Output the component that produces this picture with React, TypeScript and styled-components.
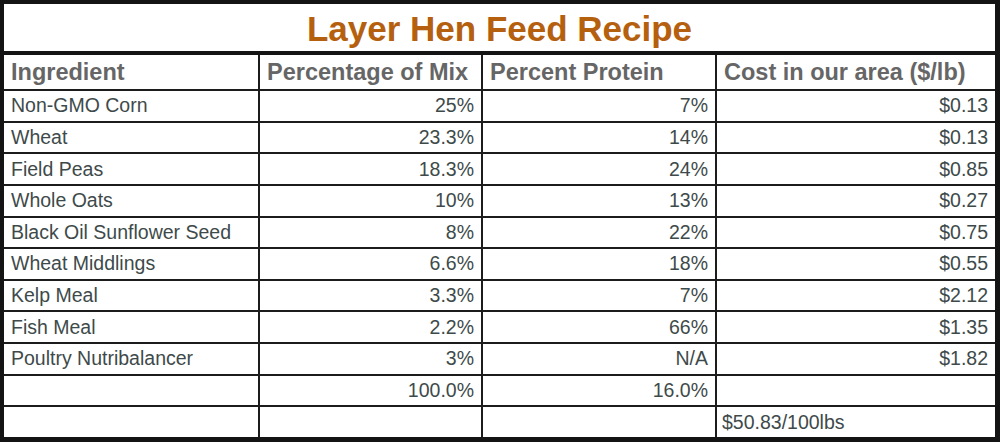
import React from "react";
import styled, { createGlobalStyle } from "styled-components";

const Global = createGlobalStyle`
  html, body { margin: 0; padding: 0; background: #ffffff; }
  body { font-family: "Liberation Sans", Arial, sans-serif; }
`;

const Frame = styled.div`
  box-sizing: border-box;
  width: 1000px;
  height: 442px;
  display: flex;
  flex-direction: column;
  border-style: solid;
  border-color: #141414;
  border-width: 4px 5px 5px 4px;
  background: #ffffff;
`;

const Title = styled.h1`
  margin: 0;
  height: 51px;
  flex: none;
  display: flex;
  align-items: center;
  justify-content: center;
  border-bottom: 4px solid #141414;
  font-family: "Liberation Sans", Arial, sans-serif;
  font-weight: 700;
  font-size: 35px;
  color: #b5600f;
  letter-spacing: 0;
  padding-top: 2px;
  box-sizing: border-box;
`;

const Grid = styled.div`
  flex: 1;
  display: grid;
  grid-template-columns: 254px 221px 232px 278px;
  grid-template-rows: 34px repeat(11, 1fr);
  gap: 2px;
  background: #1c1c1c;
`;

const Cell = styled.div<{ $align?: "left" | "right"; $head?: boolean; $tight?: boolean }>`
  background: #ffffff;
  display: flex;
  align-items: center;
  justify-content: ${(p) => (p.$align === "right" ? "flex-end" : "flex-start")};
  padding: ${(p) =>
    p.$align === "right" ? "0 7px 0 6px" : p.$tight ? "0 6px 0 5px" : "0 6px 0 7px"};
  font-family: "Liberation Sans", Arial, sans-serif;
  font-size: ${(p) => (p.$head ? "23.5px" : "19.5px")};
  font-weight: ${(p) => (p.$head ? 700 : 400)};
  color: ${(p) => (p.$head ? "#666666" : "#3e4a4a")};
  white-space: nowrap;
  overflow: hidden;
`;

const headers = ["Ingredient", "Percentage of Mix", "Percent Protein", "Cost in our area ($/lb)"];

const rows: [string, string, string, string][] = [
  ["Non-GMO Corn", "25%", "7%", "$0.13"],
  ["Wheat", "23.3%", "14%", "$0.13"],
  ["Field Peas", "18.3%", "24%", "$0.85"],
  ["Whole Oats", "10%", "13%", "$0.27"],
  ["Black Oil Sunflower Seed", "8%", "22%", "$0.75"],
  ["Wheat Middlings", "6.6%", "18%", "$0.55"],
  ["Kelp Meal", "3.3%", "7%", "$2.12"],
  ["Fish Meal", "2.2%", "66%", "$1.35"],
  ["Poultry Nutribalancer", "3%", "N/A", "$1.82"],
  ["", "100.0%", "16.0%", ""],
];

export default function App() {
  return (
    <>
      <Global />
      <Frame>
        <Title>Layer Hen Feed Recipe</Title>
        <Grid>
          {headers.map((h) => (
            <Cell key={h} $head>
              {h}
            </Cell>
          ))}
          {rows.map((r, i) => (
            <React.Fragment key={i}>
              <Cell>{r[0]}</Cell>
              <Cell $align="right">{r[1]}</Cell>
              <Cell $align="right">{r[2]}</Cell>
              <Cell $align="right">{r[3]}</Cell>
            </React.Fragment>
          ))}
          <Cell />
          <Cell />
          <Cell />
          <Cell $tight>$50.83/100lbs</Cell>
        </Grid>
      </Frame>
    </>
  );
}
